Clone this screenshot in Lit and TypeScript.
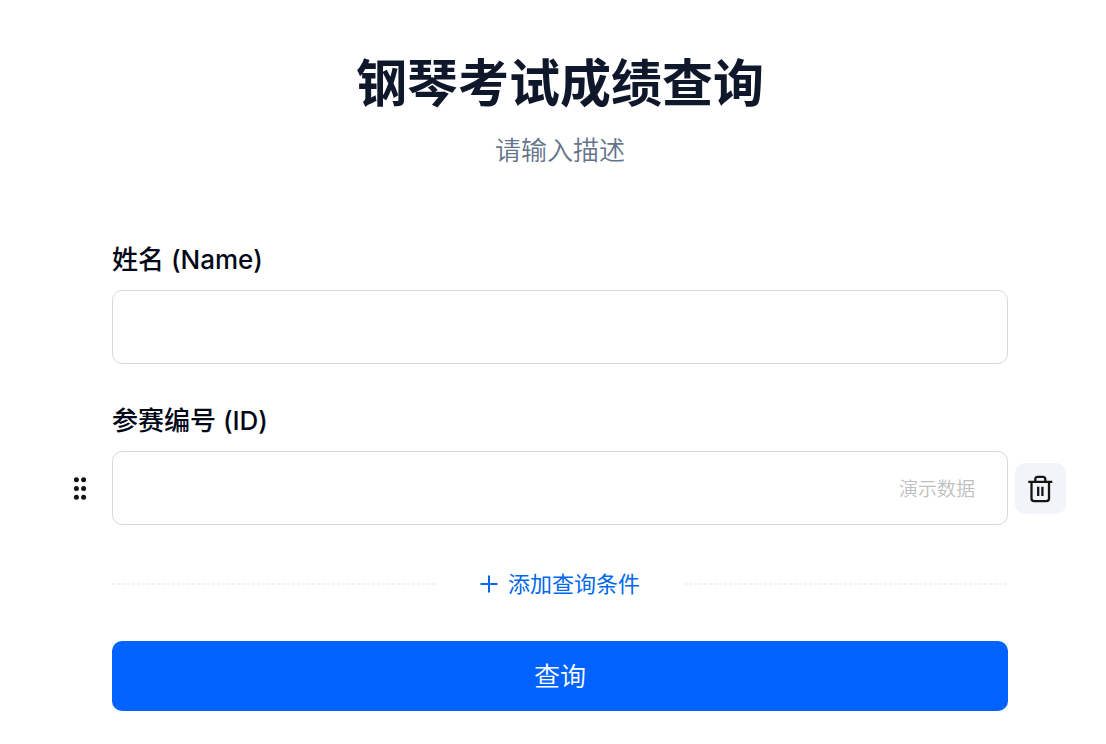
import { LitElement, html, css } from "lit";
import { customElement } from "lit/decorators.js";

@customElement("app-root")
export class AppRoot extends LitElement {
  static styles = css`
    :host {
      display: block;
      box-sizing: border-box;
      padding: 48px 98px 32px 112px;
      background: #fff;
      color: #020817;
      font-family: Inter, "Noto Sans CJK SC", sans-serif;
      font-size: 26px;
    }
    * { box-sizing: border-box; }
    h1 {
      margin: 0;
      font-size: 51px;
      line-height: 72px;
      font-weight: 600;
      text-align: center;
      color: #0f172a;
    }
    .desc {
      margin: 13px 0 0;
      line-height: 36px;
      font-weight: 350;
      text-align: center;
      color: #64748b;
    }
    form { margin-top: 75px; }
    label {
      display: block;
      line-height: 32px;
      margin-bottom: 14px;
      font-weight: 500;
    }
    .field { margin-bottom: 41px; }
    .box { position: relative; }
    input {
      display: block;
      width: 100%;
      height: 74px;
      padding: 0 32px;
      border: 1px solid #d9d9d9;
      border-radius: 10px;
      background: #fff;
      font: inherit;
      color: inherit;
    }
    .demo {
      padding-top: 2px;
      text-align: right;
      font-size: 19px;
      font-weight: 350;
    }
    .demo::placeholder { color: #bfbfbf; opacity: 1; }
    button {
      border: 0;
      padding: 0;
      font: inherit;
      cursor: pointer;
    }
    svg { display: block; }
    .tool {
      position: absolute;
      top: 0;
      bottom: 0;
      margin: auto 0;
      display: grid;
      place-items: center;
      color: #141414;
    }
    .drag { right: 100%; margin-right: 19px; width: 26px; height: 33px; background: none; }
    .trash { left: 100%; margin-left: 7px; width: 51px; height: 51px; border-radius: 10px; background: #f1f5f9; }
    .adder {
      display: flex;
      align-items: center;
      gap: 44px;
      margin-bottom: 39px;
    }
    .rule {
      flex: 1;
      height: 2px;
      background: repeating-linear-gradient(90deg, #f0f0f0 0 3px, transparent 3px 5px);
    }
    .add {
      display: flex;
      align-items: center;
      gap: 10px;
      line-height: 36px;
      font-size: 22px;
      color: #0068eb;
      background: none;
    }
    .submit {
      display: block;
      width: 100%;
      height: 70px;
      padding-bottom: 4px;
      border-radius: 10px;
      background: #0062ff;
      color: #fff;
      font-weight: 350;
    }
  `;

  render() {
    return html`
      <h1>钢琴考试成绩查询</h1>
      <p class="desc">请输入描述</p>
      <form @submit=${(e: Event) => e.preventDefault()}>
        <div class="field">
          <label for="name">姓名 (Name)</label>
          <input id="name" type="text" />
        </div>
        <div class="field">
          <label for="number">参赛编号 (ID)</label>
          <div class="box">
            <button class="tool drag" type="button" aria-label="拖动">
              <svg width="14" height="23" viewBox="0 0 14 23" fill="currentColor">
                <circle cx="3.4" cy="2.8" r="2.5" /><circle cx="10.6" cy="2.8" r="2.5" />
                <circle cx="3.4" cy="11.5" r="2.5" /><circle cx="10.6" cy="11.5" r="2.5" />
                <circle cx="3.4" cy="20.2" r="2.5" /><circle cx="10.6" cy="20.2" r="2.5" />
              </svg>
            </button>
            <input id="number" class="demo" type="text" placeholder="演示数据" />
            <button class="tool trash" type="button" aria-label="删除">
              <svg width="29" height="29" viewBox="0 0 29 29" fill="none" stroke="currentColor" stroke-width="2.3" stroke-linejoin="round">
                <path d="M2.3 7.9h24M5.5 7.9v16.6a2.6 2.6 0 0 0 2.6 2.6h12.3a2.6 2.6 0 0 0 2.6-2.6V7.9M9.3 7.9V5.2a2.4 2.4 0 0 1 2.4-2.4h5.2a2.4 2.4 0 0 1 2.4 2.4v2.7M12.2 12.7v9.2M16.4 12.7v9.2" />
              </svg>
            </button>
          </div>
        </div>
        <div class="adder">
          <span class="rule"></span>
          <button class="add" type="button">
            <svg width="18" height="18" viewBox="0 0 18 18" fill="none" stroke="currentColor" stroke-width="2">
              <path d="M9 0.5v17M0.5 9h17" />
            </svg>
            添加查询条件
          </button>
          <span class="rule"></span>
        </div>
        <button class="submit" type="submit">查询</button>
      </form>
    `;
  }
}
